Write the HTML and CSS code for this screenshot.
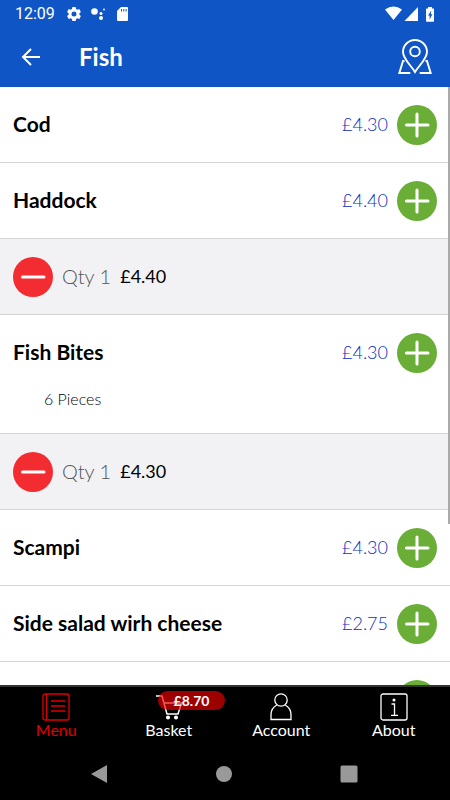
FILE: index.html
```html
<!DOCTYPE html>
<html lang="en">
<head>
<meta charset="utf-8">
<meta name="viewport" content="width=device-width, initial-scale=1">
<title>Fish</title>
<link rel="stylesheet" href="styles.css">
</head>
<body>
<svg class="defs" aria-hidden="true">
  <symbol id="plus" viewBox="0 0 40 40"><path d="M20 9v22M9.500 20h21.500"/></symbol>
  <symbol id="minus" viewBox="0 0 40 40"><path d="M9.500 20h21.500"/></symbol>
</svg>
<div class="app">
  <header class="header">
    <div class="status">
      <span class="clock">12:09</span>
      <svg class="status-left" width="62" height="16" viewBox="0 0 62 16" fill="#fff" aria-hidden="true">
        <path fill-rule="evenodd" d="M5.400 1h3.200l.5 2 1.200.7 2-.6 1.600 2.800-1.500 1.400v1.400l1.500 1.400-1.600 2.800-2-.6-1.200.7-.5 2H5.400l-.5-2-1.200-.7-2 .6L.1 10.100l1.500-1.400V7.300L.1 5.900l1.600-2.800 2 .6L4.900 3zM7 5.500a2.500 2.500 0 1 0 0 5a2.500 2.500 0 1 0 0-5z"/>
        <circle cx="27.500" cy="5.500" r="3.300"/><circle cx="34" cy="7.600" r="1.500"/><circle cx="37" cy="3.500" r=".9"/><circle cx="34" cy="12" r="2"/>
        <path fill-rule="evenodd" d="M54 1h6q1 0 1 1v12q0 1-1 1h-9q-1 0-1-1V5zM54 3v2.500h1V3zM56.300 3v2.500h1V3zM58.600 3v2.500h1V3z"/>
      </svg>
      <svg class="status-right" width="50" height="16" viewBox="0 0 50 16" fill="#fff" aria-hidden="true">
        <path d="M0 3.500Q8.500-2.500 17 3.500L8.500 14z"/>
        <path d="M33 1v14H19.500z"/>
        <path fill-rule="evenodd" d="M43 1h4v1.500h1.500q.5 0 .5.500v12q0 .8-.8.800h-6.400q-.8 0-.8-.8V3q0-.5.500-.500H43zM46.300 4.500l-3.300 5h1.600v4l2.800-5.200h-1.600z"/>
      </svg>
    </div>
    <div class="toolbar">
      <button class="icon-button" type="button" aria-label="Back">
        <svg width="20" height="20" viewBox="0 0 20 20" aria-hidden="true"><path d="M19 10H2M10 2 2 10l8 8" fill="none" stroke="#fff" stroke-width="2"/></svg>
      </button>
      <h1 class="title">Fish</h1>
      <button class="icon-button" type="button" aria-label="Find us on the map">
        <svg width="34" height="36" viewBox="0 0 34 36" fill="none" stroke="#fff" stroke-width="1.900" aria-hidden="true">
          <path d="M17 33C13.500 27 5 20 5 13a12 12 0 0 1 24 0c0 7-8.500 14-12 20z"/><circle cx="17" cy="12.500" r="4.800"/>
          <path d="M6.500 22H5L1.300 34h11M27.500 22H29l3.700 12h-11"/>
        </svg>
      </button>
    </div>
  </header>

  <main class="list">
    <section class="row"><h2 class="name">Cod</h2><span class="price">£4.30</span><button class="round add" type="button" aria-label="Add Cod"><svg><use href="#plus"/></svg></button></section>
    <section class="row"><h2 class="name">Haddock</h2><span class="price">£4.40</span><button class="round add" type="button" aria-label="Add Haddock"><svg><use href="#plus"/></svg></button></section>
    <div class="row chosen"><button class="round remove" type="button" aria-label="Remove Haddock"><svg><use href="#minus"/></svg></button><span class="qty">Qty 1</span><span class="sum">£4.40</span></div>
    <section class="row"><h2 class="name">Fish Bites</h2><span class="price">£4.30</span><button class="round add" type="button" aria-label="Add Fish Bites"><svg><use href="#plus"/></svg></button><p class="note">6 Pieces</p></section>
    <div class="row chosen"><button class="round remove" type="button" aria-label="Remove Fish Bites"><svg><use href="#minus"/></svg></button><span class="qty">Qty 1</span><span class="sum">£4.30</span></div>
    <section class="row"><h2 class="name">Scampi</h2><span class="price">£4.30</span><button class="round add" type="button" aria-label="Add Scampi"><svg><use href="#plus"/></svg></button></section>
    <section class="row"><h2 class="name">Side salad wirh cheese</h2><span class="price">£2.75</span><button class="round add" type="button" aria-label="Add Side salad"><svg><use href="#plus"/></svg></button></section>
    <section class="row"><h2 class="name"></h2><button class="round add" type="button" aria-label="Add"><svg><use href="#plus"/></svg></button></section>
    <div class="scrollbar"></div>
  </main>

  <nav class="tabs">
    <a class="tab active" href="#menu">
      <svg width="28" height="28" viewBox="0 0 28 28" fill="none" stroke="currentColor" stroke-width="1.300" aria-hidden="true"><rect x="1" y="1" width="26" height="26" rx="2"/><path d="M4.500 1v26M9 8h14M9 13h14M9 18h14"/></svg>
      <span>Menu</span>
    </a>
    <a class="tab" href="#basket">
      <svg width="28" height="28" viewBox="0 0 28 28" fill="none" stroke="currentColor" stroke-width="1.500" aria-hidden="true"><path d="M1 3h6l5 18h11l3.500-11H9"/><circle cx="13" cy="24.500" r="1.300" fill="currentColor"/><circle cx="21" cy="24.500" r="1.300" fill="currentColor"/></svg>
      <span>Basket</span>
      <span class="badge">£8.70</span>
    </a>
    <a class="tab" href="#account">
      <svg width="28" height="28" viewBox="0 0 28 28" fill="none" stroke="currentColor" stroke-width="1.300" aria-hidden="true"><circle cx="14" cy="7" r="6.200"/><path d="M9.800 12C6 14 4 18 4 22v4.500h20V22c0-4-2-8-5.800-10"/></svg>
      <span>Account</span>
    </a>
    <a class="tab" href="#about">
      <svg width="28" height="28" viewBox="0 0 28 28" fill="none" stroke="currentColor" stroke-width="1.300" aria-hidden="true"><rect x="1" y="1" width="26" height="26" rx="2"/><path d="M11.500 11h3v11M11 22.300h7"/><circle cx="14" cy="7" r=".9" fill="currentColor"/></svg>
      <span>About</span>
    </a>
  </nav>
  <div class="system">
    <button type="button" aria-label="System back"><svg width="18" height="20" viewBox="0 0 18 20"><path d="M17 1v18L1 10z"/></svg></button>
    <button type="button" aria-label="Home"><svg width="18" height="20" viewBox="0 0 18 20"><circle cx="9" cy="10" r="8"/></svg></button>
    <button type="button" aria-label="Recent apps"><svg width="18" height="20" viewBox="0 0 18 20"><rect x=".5" y="1.500" width="17" height="17" rx="1.500"/></svg></button>
  </div>
</div>
</body>
</html>
```
FILE: styles.css
```css
* {
  box-sizing: border-box;
  margin: 0;
}

body {
  font-family: Lato, sans-serif;
  background: #fff;
  color: #000;
}

button {
  padding: 0;
  border: 0;
  background: none;
}

svg {
  display: block;
}

.defs {
  display: none;
}

.app {
  display: flex;
  flex-direction: column;
  height: 100vh;
}

.header {
  background: #0f55c6;
  color: #fff;
}

.status {
  display: flex;
  align-items: center;
  height: 27px;
  padding: 0 15px;
}

.clock {
  font: 16px/20px Roboto, sans-serif;
}

.status-left {
  margin-left: 12px;
}

.status-right {
  margin-left: auto;
}

.toolbar {
  display: flex;
  align-items: center;
  height: 60px;
  padding: 0 18px 0 21px;
}

.title {
  flex: 1;
  margin-left: 38px;
  font-size: 24px;
  line-height: 30px;
  font-weight: 700;
}

.list {
  position: relative;
  flex: 1;
  min-height: 0;
  overflow: hidden;
}

.row {
  display: flex;
  flex-wrap: wrap;
  align-items: center;
  min-height: 76px;
  padding: 18px 13px 17px;
  border-bottom: 1px solid #d4d4d6;
}

.chosen {
  background: #f2f2f4;
}

.name,
.price,
.qty,
.sum {
  padding-bottom: 2px;
  line-height: 24px;
}

.name {
  flex: 1;
  font-size: 21px;
  font-weight: 700;
}

.price,
.sum {
  font-size: 18px;
  font-weight: 300;
}

.price {
  margin-right: 9px;
  color: #0a2ec0;
}

.qty {
  margin: 0 9px;
  color: #555;
  font-size: 20px;
  font-weight: 300;
}

.sum {
  font-weight: 400;
}

.note {
  width: 100%;
  padding: 16px 0 7px 31px;
  font-size: 16px;
  line-height: 20px;
  font-weight: 300;
}

.round {
  width: 40px;
  height: 40px;
  border-radius: 50%;
}

.round svg {
  width: 40px;
  height: 40px;
  stroke: #fff;
  stroke-width: 3;
  stroke-linecap: round;
}

.add {
  background: #6aae37;
}

.remove {
  background: #f22c30;
}

.scrollbar {
  position: absolute;
  top: 0;
  right: 0;
  width: 2px;
  height: 73%;
  background: #aaa;
}

.tabs {
  display: grid;
  grid-template-columns: repeat(4, 1fr);
  height: 62px;
  border-top: 2px solid #333;
  background: #000;
}

.tab {
  position: relative;
  display: flex;
  flex-direction: column;
  align-items: center;
  padding-top: 6px;
  color: #fff;
  font-size: 16px;
  line-height: 18px;
  text-decoration: none;
}

.active {
  color: #e00000;
}

.badge {
  position: absolute;
  top: 4px;
  right: 0;
  width: 67px;
  border-radius: 10px;
  background: rgba(240, 0, 0, 0.65);
  font-size: 14px;
  line-height: 19px;
  font-weight: 700;
  text-align: center;
}

.system {
  display: flex;
  align-items: center;
  justify-content: space-between;
  height: 53px;
  padding: 0 92px 0 90px;
  background: #000;
  fill: #999;
}
```
